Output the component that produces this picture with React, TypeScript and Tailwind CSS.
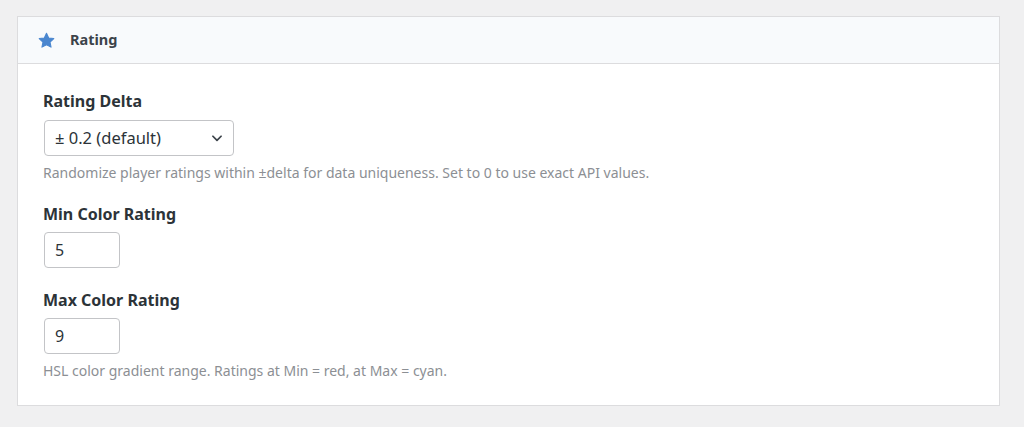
import React from "react";

export default function App() {
  return (
    <div
      className="w-[1024px] h-[427px] bg-[#f0f0f1] pt-[16px] pl-[17px]"
      style={{ fontFamily: '"Noto Sans", "Open Sans", sans-serif' }}
    >
      <div className="w-[983px] border border-[#dcdcde] bg-white">
        <div className="h-[47px] bg-[#f8fafc] border-b border-[#dcdcde] flex items-center pl-[20px] gap-[15px]">
          <svg width="17" height="17" viewBox="0 0 24 24" className="mt-[1px]">
            <path
              d="M12 1.8l3.1 6.6 7.2.9-5.3 5 1.4 7.1L12 17.9l-6.4 3.5 1.4-7.1-5.3-5 7.2-.9z"
              fill="#4a86cf"
              stroke="#4a86cf"
              strokeWidth="1.5"
              strokeLinejoin="round"
            />
          </svg>
          <span className="text-[14.5px] font-bold text-[#3c434a]">Rating</span>
        </div>
        <div className="pl-[25px] pt-[25px] pb-[24px]">
          <div className="text-[16px] leading-[24px] font-bold text-[#2c3338]">Rating Delta</div>
          <div className="ml-[1px] mt-[7px] w-[190px] h-[36px] border border-[#c3c4c7] rounded-[4px] flex items-center justify-between pl-[10px] pr-[9px] text-[16.5px] text-[#2c3338]">
            <span>± 0.2 (default)</span>
            <svg width="14" height="14" viewBox="0 0 24 24" fill="none" stroke="#3c434a" strokeWidth="3" strokeLinecap="round" strokeLinejoin="round">
              <path d="M5 9l7 7 7-7" />
            </svg>
          </div>
          <div className="mt-[7px] text-[14px] leading-[20px] text-[#8c8f94]">
            Randomize player ratings within ±delta for data uniqueness. Set to 0 to use exact API values.
          </div>
          <div className="mt-[19px] text-[16px] leading-[24px] font-bold text-[#2c3338]">Min Color Rating</div>
          <div className="ml-[1px] mt-[6px] w-[76px] h-[36px] border border-[#c3c4c7] rounded-[4px] flex items-center pl-[10px] text-[16px] text-[#2c3338]">
            5
          </div>
          <div className="mt-[20px] text-[16px] leading-[24px] font-bold text-[#2c3338]">Max Color Rating</div>
          <div className="ml-[1px] mt-[6px] w-[76px] h-[36px] border border-[#c3c4c7] rounded-[4px] flex items-center pl-[10px] text-[16px] text-[#2c3338]">
            9
          </div>
          <div className="mt-[7px] text-[14px] leading-[20px] text-[#8c8f94]">
            HSL color gradient range. Ratings at Min = red, at Max = cyan.
          </div>
        </div>
      </div>
    </div>
  );
}
